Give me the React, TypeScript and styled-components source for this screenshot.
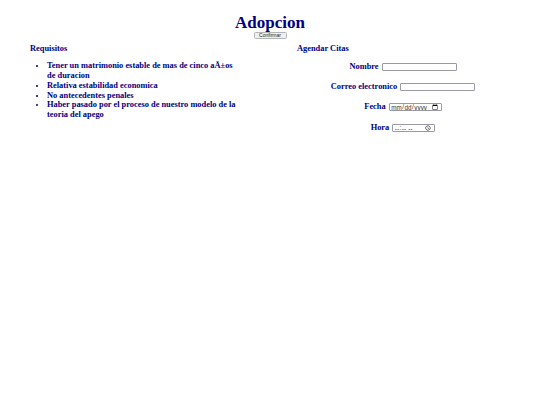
import React from "react";
import styled, { createGlobalStyle } from "styled-components";

const Global = createGlobalStyle`
  html, body { margin: 0; padding: 0; background: #ffffff; }
  body {
    font-family: "Liberation Serif", "Times New Roman", serif;
    color: #000080;
  }
`;

const Page = styled.div`
  padding: 12.9px 4px 0;
  display: flex;
  flex-direction: column;
`;

const Header = styled.header`
  display: flex;
  flex-direction: column;
  align-items: center;
`;

const Title = styled.h1`
  margin: 0;
  font-size: 17px;
  line-height: 19px;
  font-weight: bold;
  color: #000080;
`;

const ConfirmButton = styled.button`
  box-sizing: border-box;
  font-family: "Liberation Sans", Arial, sans-serif;
  font-size: 5px;
  line-height: 5px;
  height: 7px;
  min-height: 7px;
  width: 33px;
  padding: 0;
  color: #222;
  background: #efefef;
  border: 1px solid #b4b4b4;
  border-radius: 1.5px;
  display: flex;
  align-items: center;
  justify-content: center;
`;

const Columns = styled.div`
  display: flex;
  margin-top: 5.5px;
`;

const Column = styled.section`
  flex: 1 1 50%;
  padding: 0 30px 0 26px;
  font-size: 8.4px;
  line-height: 10px;
  font-weight: bold;
`;

const SectionTitle = styled.h3<{ $shift?: number }>`
  margin: 0;
  padding-left: ${(p) => p.$shift ?? 0}px;
  font-size: 8.4px;
  line-height: 10px;
  font-weight: bold;
`;

const List = styled.ul`
  margin: 7px 0 0;
  padding-left: 17px;
  list-style: disc;
  line-height: 9.7px;
`;

const Item = styled.li``;

const Form = styled.form`
  display: flex;
  flex-direction: column;
  margin-top: 2.5px;
  margin-left: -26px;
  margin-right: -30px;
`;

const Row = styled.div<{ $h?: number }>`
  height: ${(p) => p.$h ?? 20}px;
  display: flex;
  align-items: center;
  justify-content: center;
  gap: 3px;
`;

const Label = styled.label`
  font-weight: bold;
  font-size: 8.4px;
`;

const TextInput = styled.input`
  box-sizing: border-box;
  width: 75px;
  height: 7.4px;
  padding: 0;
  border: 0.8px solid #9a9aa6;
  border-radius: 1px;
  background: #fff;
`;

const PickerInput = styled.input<{ $w: number }>`
  zoom: 0.525;
  box-sizing: border-box;
  width: ${(p) => p.$w}px;
  height: 14.5px;
  padding: 0 2px;
  font-family: "Liberation Sans", Arial, sans-serif;
  font-size: 12px;
  color: #333;
  border: 1px solid #9a9aa6;
  border-radius: 2px;
  background: #fff;
`;

export default function App() {
  return (
    <>
      <Global />
      <Page>
        <Header>
          <Title>Adopcion</Title>
          <ConfirmButton type="button">Confirmar</ConfirmButton>
        </Header>
        <Columns>
          <Column>
            <SectionTitle>Requisitos</SectionTitle>
            <List>
              <Item>Tener un matrimonio estable de mas de cinco aÃ±os de duracion</Item>
              <Item>Relativa estabilidad economica</Item>
              <Item>No antecedentes penales</Item>
              <Item>Haber pasado por el proceso de nuestro modelo de la teoria del apego</Item>
            </List>
          </Column>
          <Column>
            <SectionTitle $shift={1}>Agendar Citas</SectionTitle>
            <Form>
              <Row>
                <Label htmlFor="nombre">Nombre</Label>
                <TextInput id="nombre" type="text" />
              </Row>
              <Row>
                <Label htmlFor="correo">Correo electronico</Label>
                <TextInput id="correo" type="email" />
              </Row>
              <Row>
                <Label htmlFor="fecha">Fecha</Label>
                <PickerInput id="fecha" type="date" $w={101} />
              </Row>
              <Row $h={22}>
                <Label htmlFor="hora">Hora</Label>
                <PickerInput id="hora" type="time" $w={82} />
              </Row>
            </Form>
          </Column>
        </Columns>
      </Page>
    </>
  );
}
